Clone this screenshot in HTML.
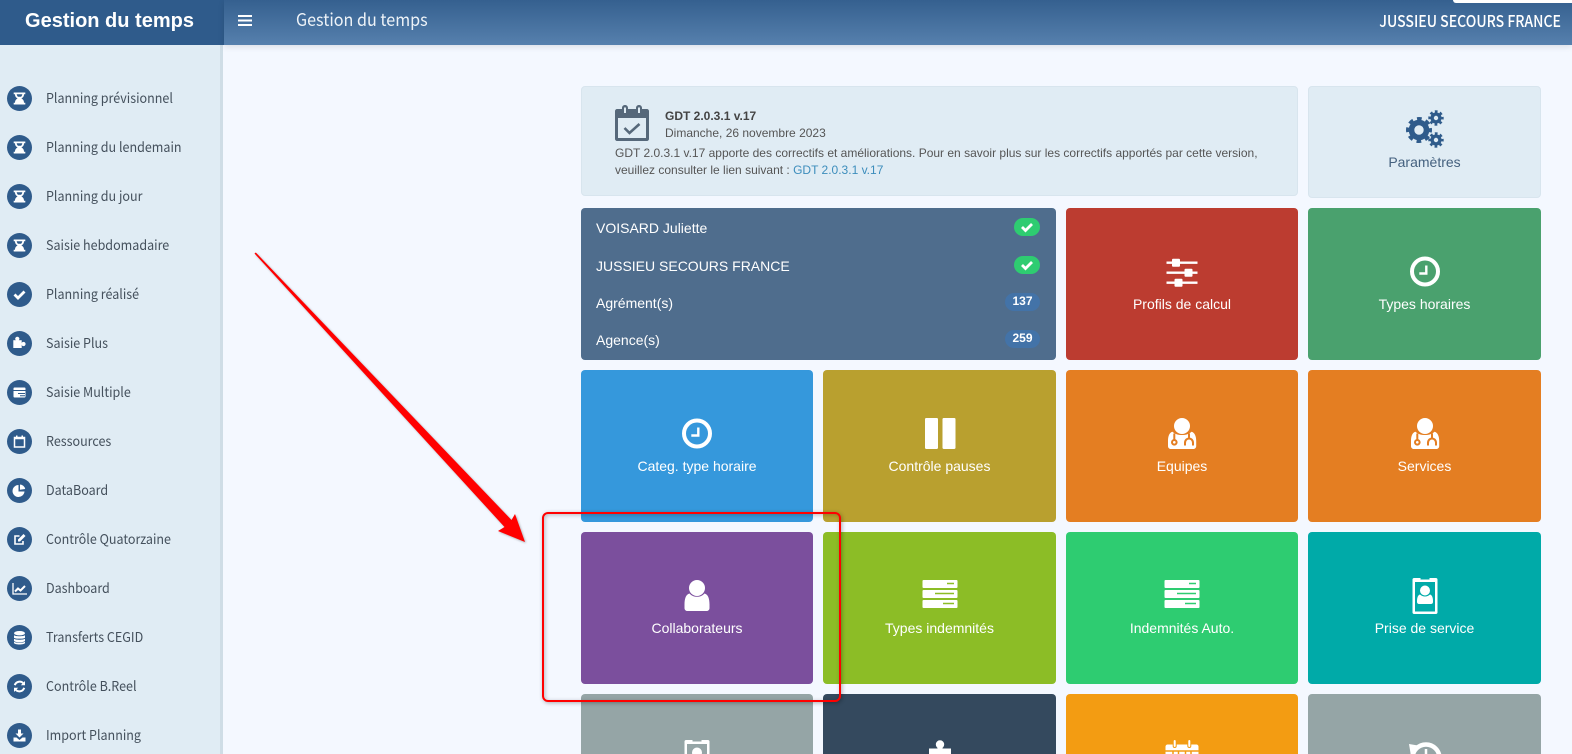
<!DOCTYPE html>
<html lang="fr">
<head>
<meta charset="utf-8">
<title>Gestion du temps</title>
<style>
html,body{margin:0;padding:0;width:1572px;height:754px;overflow:hidden;background:#f4f8ff}
body{position:relative;font-family:"Liberation Sans",Arial,sans-serif}
.a{position:absolute}
#sb{left:0;top:45px;width:220px;height:709px;background:#e0ecf4;border-right:3px solid #cfdde6}
#hl{left:0;top:0;width:224px;height:45px;background:#2f5b8b;color:#fff;font-weight:bold;font-size:20px;line-height:42px;text-align:center;box-sizing:border-box;padding-right:5px}
#hr{left:224px;top:0;width:1348px;height:45px;background:linear-gradient(#35608f,#5680ad);box-shadow:0 2px 6px rgba(0,0,0,.1)}
.ss{font-family:"Noto Sans CJK JP","Liberation Sans",sans-serif}
.it{position:absolute;left:7px;width:210px;height:25px}
.it .c{position:absolute;left:0;top:0;width:25px;height:25px;border-radius:50%;background:#2f5b8b;color:#fff}
.it .c svg{position:absolute;left:0;top:0;width:25px;height:25px}
.it span{position:absolute;left:39px;top:-1px;line-height:24px;font-size:13.5px;color:#44505c;white-space:nowrap;transform:scaleX(.928);transform-origin:0 50%}
.card{position:absolute;border-radius:4px;width:232px;height:152px;color:#fff;overflow:hidden}
.card svg{position:absolute;left:50%;margin-left:-20px;top:44px;width:40px;height:40px}
.card b{position:absolute;left:0;right:0;top:86px;font-weight:normal;font-size:14px;line-height:20px;text-align:center}
.pan{position:absolute;background:#e0ecf4;border:1px solid #d8e5ee;border-radius:4px;box-sizing:border-box}
.row{position:absolute;left:15px;color:#fff;font-size:14px;line-height:20px;white-space:nowrap}
.bd{position:absolute;height:18px;border-radius:9px;color:#fff;font-size:12px;font-weight:bold;line-height:17px;text-align:center}
</style>
</head>
<body>
<svg width="0" height="0" style="position:absolute">
<defs>
<symbol id="hg" viewBox="0 0 25 25"><path fill="#fff" d="M6.700 6.500h11.600v1.800H17c0 2.400-1.200 3.400-2.600 4.200 1.400.8 2.600 1.800 2.600 4.200h1.300v1.800H6.700v-1.800H8c0-2.400 1.200-3.400 2.600-4.200C9.200 11.700 8 10.700 8 8.300H6.700z"/><path fill="#2f5b8b" d="M9.700 8.300h5.600c-.2 1.300-.7 2-1.200 2.400h-3.200c-.5-.4-1-1.100-1.200-2.400z"/></symbol>
<symbol id="ck" viewBox="0 0 25 25"><path fill="none" stroke="#fff" stroke-width="2.800" d="M7.500 12.500l3.500 3.500 6.500-6.500"/></symbol>
<symbol id="pz" viewBox="0 0 25 25"><g fill="#fff"><rect x="6.300" y="9.200" width="8.400" height="7.800"/><circle cx="10.300" cy="7.800" r="2.100"/><circle cx="16.500" cy="13" r="2.100"/></g></symbol>
<symbol id="ml" viewBox="0 0 25 25"><rect x="6.500" y="7.500" width="12" height="10" rx="1" fill="#fff"/><path stroke="#2f5b8b" stroke-width="1" d="M6.500 10.500h12M11 13.500h7M13 15.800h5"/></symbol>
<symbol id="cal" viewBox="0 0 25 25"><path fill="none" stroke="#fff" stroke-width="1.500" d="M7.500 8.500h10v9.500h-10z"/><path fill="#fff" d="M7 8h11v2.200H7zM9 6.500h1.500V9H9zM14.500 6.500H16V9h-1.500z"/></symbol>
<symbol id="pie" viewBox="0 0 25 25"><path fill="#fff" d="M11.500 7a6 6 0 1 0 6 6.500h-6z"/><path fill="#fff" d="M13 6.500a5.500 5.500 0 0 1 5.200 4.500l-5.200.8z"/></symbol>
<symbol id="ed" viewBox="0 0 25 25"><path fill="none" stroke="#fff" stroke-width="1.600" d="M16 14v3H8V9h4.500"/><path fill="#fff" d="M11 12.500l5.500-5.500 2 2-5.500 5.500h-2z"/></symbol>
<symbol id="ln" viewBox="0 0 25 25"><path fill="none" stroke="#fff" stroke-width="1.300" d="M6 7v11h14"/><path fill="none" stroke="#fff" stroke-width="2" d="M8 15.500l3-3 2.500 2 4.500-4.500"/></symbol>
<symbol id="db" viewBox="0 0 25 25"><ellipse cx="12.500" cy="8.200" rx="5.500" ry="2.200" fill="#fff"/><path fill="#fff" d="M7 10.300c1.400 1.300 9.600 1.300 11 0v2.400c-1.400 1.300-9.600 1.300-11 0zM7 13.800c1.400 1.300 9.600 1.300 11 0v1.900c-.5 2-10.500 2-11 0zM7 16.800c1.400 1.300 9.600 1.300 11 0V18c-.5 2-10.500 2-11 0z"/></symbol>
<symbol id="rf" viewBox="0 0 25 25"><path fill="none" stroke="#fff" stroke-width="2" d="M7.800 11.200a5 5 0 0 1 8.800-1.500M17.200 13.800a5 5 0 0 1-8.800 1.500"/><path fill="#fff" d="M18 7v4.200h-4.200zM7 18v-4.200h4.200z"/></symbol>
<symbol id="dl" viewBox="0 0 25 25"><path fill="#fff" d="M11 6.500h3v4h2.500l-4 4-4-4H11zM6.500 14.500h3l3 2.500 3-2.500h3V18.500h-12z"/></symbol>

<symbol id="clock" viewBox="0 0 40 40"><circle cx="20" cy="19.500" r="13" fill="none" stroke="#fff" stroke-width="4"/><path fill="none" stroke="#fff" stroke-width="2.400" d="M21.300 13.500v8h-7"/></symbol>
<symbol id="pause" viewBox="0 0 40 40"><rect x="5" y="4" width="13" height="31" rx="1.200" fill="#fff"/><rect x="22.500" y="4" width="13" height="31" rx="1.200" fill="#fff"/></symbol>
<symbol id="sliders" viewBox="0 0 40 40"><path stroke="#fff" stroke-width="2.400" d="M4.500 10.700h31M4.500 20.700h31M4.500 30.700h31"/><rect x="10" y="6.700" width="8" height="8" rx="1" fill="#fff"/><rect x="22.500" y="16.700" width="8" height="8" rx="1" fill="#fff"/><rect x="12.500" y="26.700" width="8" height="8" rx="1" fill="#fff"/></symbol>
<symbol id="usermd" viewBox="0 0 40 40"><circle cx="20" cy="12" r="8" fill="#fff"/><path fill="#fff" d="M10.500 17.700c2.200 2.200 5.500 3.300 9.500 3.300s7.300-1.100 9.500-3.300c3.200.8 4.700 4.500 4.700 9.300v5c0 1.800-1.200 3-2.800 3H8.800C7.200 35 6 33.800 6 32v-5c0-4.800 1.300-8.500 4.500-9.300z"/><g fill="none" stroke="#e47e22" stroke-width="2"><path d="M12.300 19.500v6.300M27 19.500v4.500M23 31.500v-2.500c0-6 8-6 8 0v2.500"/><circle cx="12.300" cy="28.300" r="2.300"/></g></symbol>
<symbol id="user" viewBox="0 0 40 40"><circle cx="20" cy="12" r="8" fill="#fff"/><path fill="#fff" d="M12.500 17.500c2 2.300 4.500 3.300 7.500 3.300s5.500-1 7.500-3.300c3.500.8 5 5 5 11v3.500c0 2-1.500 3-3 3h-19c-1.500 0-3-1-3-3v-3.500c0-6 1.500-10.200 5-11z"/></symbol>
<symbol id="badge" viewBox="0 0 40 40"><path fill="#fff" fill-rule="evenodd" d="M9 2h6.500v1.500h9V2H31c.8 0 1.500.7 1.500 1.500v33c0 .8-.7 1.500-1.500 1.500H9c-.8 0-1.500-.7-1.500-1.500v-33C7.500 2.700 8.200 2 9 2zm1 4v29.500h20V6z"/><circle cx="20" cy="14.500" r="5" fill="#fff"/><path fill="#fff" d="M15 18.500c1.500 1.300 3 2 5 2s3.500-.7 5-2c2 .6 3 3 3 6.500v1c0 1.200-1 2-2 2H14c-1 0-2-.8-2-2v-1c0-3.500 1-5.900 3-6.500z"/></symbol>
<symbol id="puzzle" viewBox="0 0 40 40"><g fill="#fff"><circle cx="20" cy="6.500" r="4.200"/><rect x="17.500" y="8" width="5" height="4"/><rect x="9" y="10.500" width="22" height="14"/></g></symbol>
<symbol id="calbig" viewBox="0 0 40 40"><path fill="#fff" d="M5.500 6.500h29c1 0 2 1 2 2V35h-33V8.500c0-1 1-2 2-2z"/><g fill="#f39c12"><rect x="10.700" y="1" width="4" height="9" rx="2"/><rect x="25.300" y="1" width="4" height="9" rx="2"/></g><g fill="#fff"><rect x="11.700" y="2" width="2" height="7" rx="1"/><rect x="26.300" y="2" width="2" height="7" rx="1"/></g><path stroke="#f39c12" stroke-width="1.500" d="M3.500 13h33M11 13v22M16.500 13v22M23.500 13v22M29 13v22"/></symbol>
<symbol id="hist" viewBox="0 0 40 40"><circle cx="21" cy="20" r="13.500" fill="none" stroke="#fff" stroke-width="4.500"/><path fill="#fff" d="M4 6l12 2-10 10z"/><path fill="none" stroke="#fff" stroke-width="2.500" d="M21 11v10"/></symbol>
</defs>
</svg>

<div class="a" id="sb"></div>
<div class="a" id="hl">Gestion du temps</div>
<div class="a" id="hr"></div>
<svg class="a" style="left:238px;top:15px" width="14" height="11"><path fill="#fff" d="M0 0h14v2H0zM0 4.500h14v2H0zM0 9h14v2H0z"/></svg>
<div class="a ss" style="left:296px;top:8px;font-size:17.500px;line-height:24px;color:#eef3f8;white-space:nowrap;transform:scaleX(.922);transform-origin:0 50%">Gestion du temps</div>
<div class="a ss" style="right:11px;top:8px;font-size:16px;line-height:24px;font-weight:500;color:#fff;white-space:nowrap;transform:scaleX(.878);transform-origin:100% 50%">JUSSIEU SECOURS FRANCE</div>
<div class="a" style="left:1453px;top:0;width:119px;height:3px;background:#fff;border-bottom-left-radius:3px"></div>

<div class="it ss" style="top:86px"><div class="c"><svg><use href="#hg"/></svg></div><span>Planning prévisionnel</span></div>
<div class="it ss" style="top:135px"><div class="c"><svg><use href="#hg"/></svg></div><span>Planning du lendemain</span></div>
<div class="it ss" style="top:184px"><div class="c"><svg><use href="#hg"/></svg></div><span>Planning du jour</span></div>
<div class="it ss" style="top:233px"><div class="c"><svg><use href="#hg"/></svg></div><span>Saisie hebdomadaire</span></div>
<div class="it ss" style="top:282px"><div class="c"><svg><use href="#ck"/></svg></div><span>Planning réalisé</span></div>
<div class="it ss" style="top:331px"><div class="c"><svg><use href="#pz"/></svg></div><span>Saisie Plus</span></div>
<div class="it ss" style="top:380px"><div class="c"><svg><use href="#ml"/></svg></div><span>Saisie Multiple</span></div>
<div class="it ss" style="top:429px"><div class="c"><svg><use href="#cal"/></svg></div><span>Ressources</span></div>
<div class="it ss" style="top:478px"><div class="c"><svg><use href="#pie"/></svg></div><span>DataBoard</span></div>
<div class="it ss" style="top:527px"><div class="c"><svg><use href="#ed"/></svg></div><span>Contrôle Quatorzaine</span></div>
<div class="it ss" style="top:576px"><div class="c"><svg><use href="#ln"/></svg></div><span>Dashboard</span></div>
<div class="it ss" style="top:625px"><div class="c"><svg><use href="#db"/></svg></div><span>Transferts CEGID</span></div>
<div class="it ss" style="top:674px"><div class="c"><svg><use href="#rf"/></svg></div><span>Contrôle B.Reel</span></div>
<div class="it ss" style="top:723px"><div class="c"><svg><use href="#dl"/></svg></div><span>Import Planning</span></div>

<div class="pan" style="left:581px;top:86px;width:717px;height:110px;color:#555;font-size:12px;line-height:17px">
  <svg class="a" style="left:33px;top:18px" width="34" height="36" viewBox="0 0 34 36"><path fill="#56687a" fill-rule="evenodd" d="M2 4h5V3c0-4 6-4 6 0v1h8V3c0-4 6-4 6 0v1h5c1 0 2 1 2 2v28c0 1-1 2-2 2H2c-1 0-2-1-2-2V6c0-1 1-2 2-2zm1 9v20h28V13z"/><path fill="#e0ecf4" d="M9 2.500h2V8H9zM23 2.500h2V8h-2z"/><path fill="none" stroke="#56687a" stroke-width="2.600" d="M9.500 23l5 5 10-9"/></svg>
  <div class="a" style="left:83px;top:21px;font-weight:bold;color:#444;white-space:nowrap">GDT 2.0.3.1 v.17</div>
  <div class="a" style="left:83px;top:38px;white-space:nowrap">Dimanche, 26 novembre 2023</div>
  <div class="a" style="left:33px;top:58px;white-space:nowrap">GDT 2.0.3.1 v.17 apporte des correctifs et améliorations. Pour en savoir plus sur les correctifs apportés par cette version,</div>
  <div class="a" style="left:33px;top:75px;white-space:nowrap">veuillez consulter le lien suivant : <span style="color:#3c8dbc">GDT 2.0.3.1 v.17</span></div>
</div>

<div class="pan" style="left:1308px;top:86px;width:233px;height:112px">
  <svg class="a" style="left:96px;top:23px" width="40" height="38" viewBox="0 0 40 38">
    <g fill="none" stroke="#2f5b8b">
      <circle cx="14" cy="20" r="7.500" stroke-width="5.600"/>
      <circle cx="14" cy="20" r="11" stroke-width="4" stroke-dasharray="4.600 4.040" stroke-dashoffset="2.300"/>
      <circle cx="31" cy="8" r="3.900" stroke-width="3.400"/>
      <circle cx="31" cy="8" r="6.200" stroke-width="3" stroke-dasharray="2.600 2.270" stroke-dashoffset="1.300"/>
      <circle cx="31" cy="30" r="3.900" stroke-width="3.400"/>
      <circle cx="31" cy="30" r="6.200" stroke-width="3" stroke-dasharray="2.600 2.270" stroke-dashoffset="1.300"/>
    </g>
  </svg>
  <div class="a" style="left:0;right:0;top:65px;text-align:center;font-size:14px;line-height:20px;color:#45617f">Paramètres</div>
</div>

<div class="card" style="left:581px;top:208px;width:475px;background:#4f6d8d">
  <div class="row" style="top:10px">VOISARD Juliette</div>
  <div class="row" style="top:48px">JUSSIEU SECOURS FRANCE</div>
  <div class="row" style="top:85px">Agrément(s)</div>
  <div class="row" style="top:122px">Agence(s)</div>
  <div class="bd" style="left:433px;top:10px;width:26px;background:#2ecc71"><svg style="position:absolute;left:6px;top:3px;width:14px;height:12px;margin:0" viewBox="0 0 14 12"><path fill="none" stroke="#fff" stroke-width="2.800" d="M2 6l3.500 3.500L12 3"/></svg></div>
  <div class="bd" style="left:433px;top:48px;width:26px;background:#2ecc71"><svg style="position:absolute;left:6px;top:3px;width:14px;height:12px;margin:0" viewBox="0 0 14 12"><path fill="none" stroke="#fff" stroke-width="2.800" d="M2 6l3.500 3.500L12 3"/></svg></div>
  <div class="bd" style="left:424px;top:85px;width:35px;background:#4373a8">137</div>
  <div class="bd" style="left:424px;top:122px;width:35px;background:#4373a8">259</div>
</div>

<div class="card" style="left:1066px;top:208px;background:#bc3c30"><svg><use href="#sliders"/></svg><b>Profils de calcul</b></div>
<div class="card" style="left:1308px;top:208px;width:233px;background:#4aa16e"><svg><use href="#clock"/></svg><b>Types horaires</b></div>

<div class="card" style="left:581px;top:370px;background:#3598dc"><svg><use href="#clock"/></svg><b>Categ. type horaire</b></div>
<div class="card" style="left:823px;top:370px;width:233px;background:#b9a02f"><svg><use href="#pause"/></svg><b>Contrôle pauses</b></div>
<div class="card" style="left:1066px;top:370px;background:#e47e22"><svg><use href="#usermd"/></svg><b>Equipes</b></div>
<div class="card" style="left:1308px;top:370px;width:233px;background:#e47e22"><svg><use href="#usermd"/></svg><b>Services</b></div>

<div class="card" style="left:581px;top:532px;background:#7b4f9d"><svg><use href="#user"/></svg><b>Collaborateurs</b></div>
<div class="card" style="left:823px;top:532px;width:233px;background:#8cbd26"><svg viewBox="0 0 40 40"><g fill="#fff"><rect x="2.500" y="4" width="35" height="8" rx="1"/><rect x="2.500" y="14" width="35" height="8" rx="1"/><rect x="2.500" y="24" width="35" height="8" rx="1"/></g><path stroke="#8cbd26" stroke-width="1.500" d="M27 7.500h7M15 17.500h19M23 27.500h11"/></svg><b>Types indemnités</b></div>
<div class="card" style="left:1066px;top:532px;background:#2ecc71"><svg viewBox="0 0 40 40"><g fill="#fff"><rect x="2.500" y="4" width="35" height="8" rx="1"/><rect x="2.500" y="14" width="35" height="8" rx="1"/><rect x="2.500" y="24" width="35" height="8" rx="1"/></g><path stroke="#2ecc71" stroke-width="1.500" d="M27 7.500h7M15 17.500h19M23 27.500h11"/></svg><b>Indemnités Auto.</b></div>
<div class="card" style="left:1308px;top:532px;width:233px;background:#00aaa8"><svg><use href="#badge"/></svg><b>Prise de service</b></div>

<div class="card" style="left:581px;top:694px;height:60px;border-radius:4px 4px 0 0;background:#95a5a6"><svg><use href="#badge"/></svg></div>
<div class="card" style="left:823px;top:694px;width:233px;height:60px;border-radius:4px 4px 0 0;background:#34495e"><svg><use href="#puzzle"/></svg></div>
<div class="card" style="left:1066px;top:694px;height:60px;border-radius:4px 4px 0 0;background:#f39c12"><svg><use href="#calbig"/></svg></div>
<div class="card" style="left:1308px;top:694px;width:233px;height:60px;border-radius:4px 4px 0 0;background:#95a5a6"><svg><use href="#hist"/></svg></div>

<div class="a" style="left:542px;top:512px;width:299px;height:190px;box-sizing:border-box;border:2px solid #f00;border-radius:6px;box-shadow:1px 1px 4px rgba(0,0,0,.3),inset 1px 1px 4px rgba(0,0,0,.25)"></div>

<svg class="a" style="left:0;top:0;filter:drop-shadow(1px 1px 1px rgba(0,0,0,.3))" width="1572" height="754">
  <polygon fill="#f00" points="254.500,253.500 255.800,252.500 511.500,520 515,514 525,542 498,531 504.500,527"/>
</svg>
</body>
</html>
